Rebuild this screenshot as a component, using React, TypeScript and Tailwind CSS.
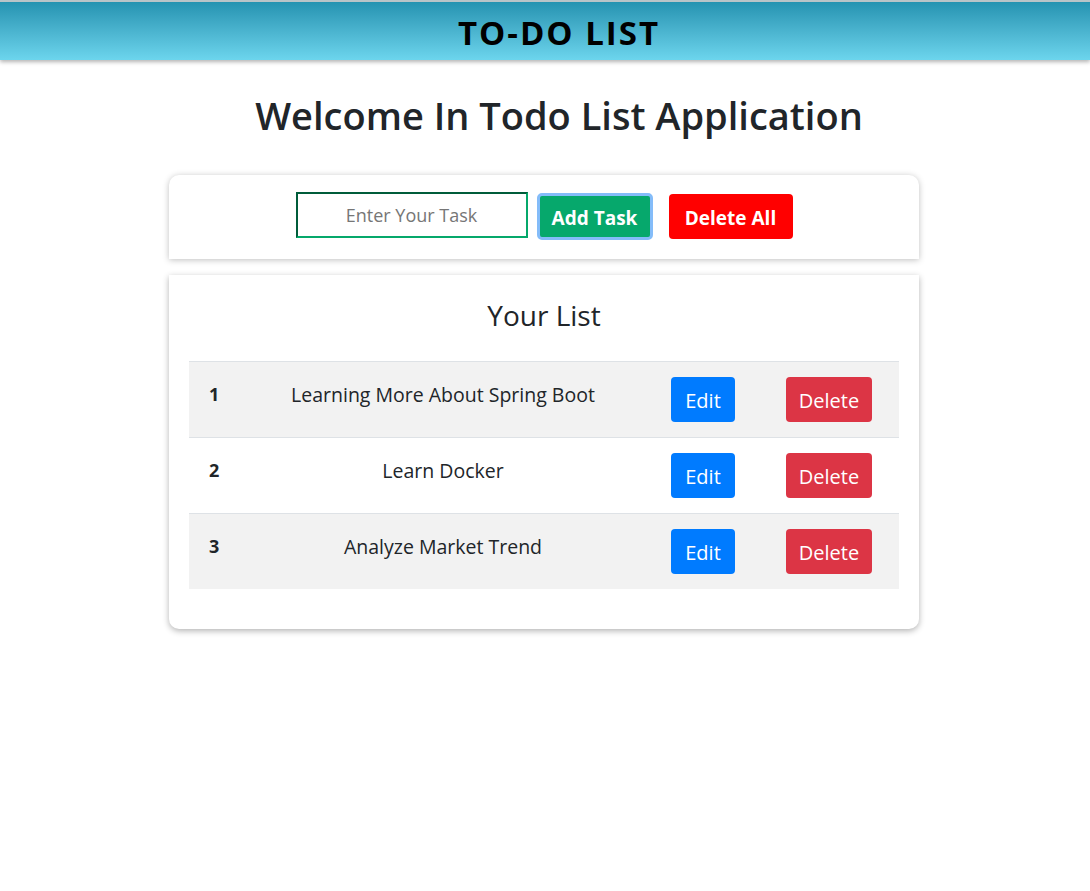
import React from "react";

const tasks = [
  { id: 1, title: "Learning More About Spring Boot" },
  { id: 2, title: "Learn Docker" },
  { id: 3, title: "Analyze Market Trend" },
];

export default function App() {
  return (
    <div className="min-h-[891px] bg-white font-['Open_Sans',sans-serif] text-[#212529]">
      <header className="h-[60px] border-t-2 border-[#b8c4c8] bg-gradient-to-b from-[#2493b1] to-[#6cd5ed] shadow-[0_2px_4px_rgba(0,0,0,0.3)] flex items-center justify-center pl-[28px]">
        <h2 className="mt-[3px] text-[33px] font-bold tracking-[2px] text-black">TO-DO LIST</h2>
      </header>

      <h1 className="mt-[31px] pl-[28px] text-center text-[38px] font-semibold leading-[48px] text-[#212529]">
        Welcome In Todo List Application
      </h1>

      <div className="mx-auto mt-[36px] w-[752px] pr-[2px]">
        <div className="flex h-[84px] items-start justify-center rounded-t-[10px] bg-white shadow-[0_1px_6px_rgba(0,0,0,0.25)]">
          <input
            type="text"
            placeholder="Enter Your Task"
            className="mt-[17px] h-[46px] w-[232px] border-2 border-t-[#005c3a] border-l-[#005c3a] border-r-[#05a86b] border-b-[#05a86b] text-center text-[18px] text-black placeholder:text-[#767676] outline-none"
          />
          <button className="ml-[9px] mt-[18px] h-[47px] w-[116px] rounded-[5px] border-[3px] border-[#84bcf9] bg-[#06a86c] pt-[3px] text-[19px] font-bold text-white">
            Add Task
          </button>
          <button className="ml-[16px] mt-[19px] h-[45px] w-[124px] rounded-[4px] bg-[#ff0000] pt-[3px] text-[19px] font-bold text-white">
            Delete All
          </button>
        </div>

        <div className="mt-[16px] rounded-b-[10px] bg-white px-[20px] pb-[40px] shadow-[0_2px_6px_rgba(0,0,0,0.3)]">
          <h3 className="pt-[20px] pb-[26px] text-center text-[28px] leading-[40px]">
            Your List
          </h3>
          <div>
            {tasks.map((t, i) => (
              <div
                key={t.id}
                className={`flex h-[76px] items-center border-t border-[#dee2e6] ${i % 2 === 0 ? "bg-[#f2f2f2]" : "bg-white"}`}
              >
                <div className="w-[80px] pl-[20px] pb-[10px] text-[18px] font-bold">{t.id}</div>
                <div className="w-[348px] pb-[10px] text-center text-[19.5px]">{t.title}</div>
                <button className="ml-[54px] h-[45px] w-[64px] rounded-[4px] bg-[#007bff] pt-[2px] text-[20px] text-white">
                  Edit
                </button>
                <button className="ml-[51px] h-[45px] w-[86px] rounded-[4px] bg-[#dc3545] pt-[2px] text-[20px] text-white">
                  Delete
                </button>
              </div>
            ))}
          </div>
        </div>
      </div>
    </div>
  );
}
